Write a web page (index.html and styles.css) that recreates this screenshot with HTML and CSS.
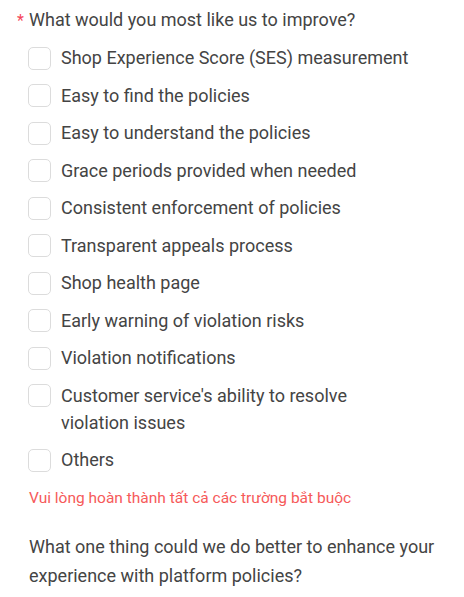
FILE: index.html
```html
<!DOCTYPE html>
<html>
<head>
<meta charset="utf-8">
<link rel="stylesheet" href="styles.css">
</head>
<body>
<div class="survey">
  <div class="question">
    <div class="q-title"><span class="req">*</span>What would you most like us to improve?</div>
    <ul class="options">
      <li class="option"><span class="box"></span><span class="label">Shop Experience Score (SES) measurement</span></li>
      <li class="option"><span class="box"></span><span class="label">Easy to find the policies</span></li>
      <li class="option"><span class="box"></span><span class="label">Easy to understand the policies</span></li>
      <li class="option"><span class="box"></span><span class="label">Grace periods provided when needed</span></li>
      <li class="option"><span class="box"></span><span class="label">Consistent enforcement of policies</span></li>
      <li class="option"><span class="box"></span><span class="label">Transparent appeals process</span></li>
      <li class="option"><span class="box"></span><span class="label">Shop health page</span></li>
      <li class="option"><span class="box"></span><span class="label">Early warning of violation risks</span></li>
      <li class="option"><span class="box"></span><span class="label">Violation notifications</span></li>
      <li class="option"><span class="box"></span><span class="label">Customer service's ability to resolve violation issues</span></li>
      <li class="option"><span class="box"></span><span class="label">Others</span></li>
    </ul>
    <div class="error">Vui lòng hoàn thành tất cả các trường bắt buộc</div>
  </div>
  <div class="question">
    <div class="q-title plain">What one thing could we do better to enhance your experience with platform policies?</div>
  </div>
</div>
</body>
</html>
```

FILE: styles.css
```css
html, body {
  margin: 0;
  padding: 0;
  background: #fff;
}
body {
  font-family: Roboto, "Noto Sans", sans-serif;
  color: #444;
}
.survey {
  padding: 6px 16px 0 29px;
}
.q-title {
  position: relative;
  font-size: 18px;
  line-height: 27px;
}
.req {
  position: absolute;
  left: -12px;
  top: 1px;
  color: #f5475b;
  font-size: 16px;
}
.options {
  list-style: none;
  margin: 0;
  padding: 0;
  margin-top: 11px;
  display: flex;
  flex-direction: column;
  gap: 10.5px;
}
.option {
  display: flex;
  align-items: flex-start;
  gap: 10px;
  font-size: 18px;
  line-height: 27px;
  padding-right: 32px;
}
.box {
  flex: none;
  width: 23px;
  height: 23px;
  margin-top: 2.5px;
  margin-left: -1px;
  border: 1px solid #dcdcdc;
  border-radius: 5px;
  box-sizing: border-box;
}
.error {
  margin-top: 15px;
  color: #f65a5a;
  font-size: 15.5px;
  line-height: 20px;
}
.question + .question {
  margin-top: 24px;
}
.q-title.plain {
  line-height: 29px;
}
```
